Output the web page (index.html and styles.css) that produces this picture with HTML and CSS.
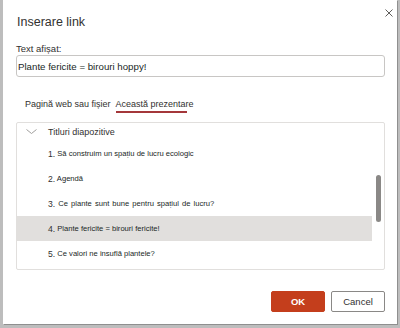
FILE: index.html
```html
<!DOCTYPE html>
<html>
<head>
    <meta http-equiv="Content-Type" content="text/html;charset=UTF-8"/>
    <title>Inserare link</title>
    <link rel="stylesheet" href="styles.css">
</head>
<body>
<div class="dialog">
    <div class="header">
        <h1>Inserare link</h1>
        <button class="close" aria-label="Închidere">
            <svg width="8" height="8" viewBox="0 0 8 8">
                <path d="M0.5 0.5 L7.5 7.5 M7.5 0.5 L0.5 7.5" stroke="#605e5c" stroke-width="1" fill="none"/>
            </svg>
        </button>
    </div>
    <label class="field-label" for="displayText">Text afișat:</label>
    <input type="text" id="displayText" class="text-input" value="Plante fericite = birouri hoppy!">

    <div class="tabs">
        <span class="tab">Pagină web sau fișier</span>
        <span class="tab active">Această prezentare</span>
    </div>

    <div class="list-box">
        <div class="rows">
            <div class="group-row">
                <svg class="chevron" width="11" height="5" viewBox="0 0 11 5">
                    <path d="M0.5 0.5 L5.5 4.5 L10.5 0.5" stroke="#a19f9d" stroke-width="1" fill="none"/>
                </svg>
                <span>Titluri diapozitive</span>
            </div>
            <div class="item"><span class="num">1.</span> Să construim un spațiu de lucru ecologic</div>
            <div class="item"><span class="num">2.</span> Agendă</div>
            <div class="item wide"><span class="num">3.</span> Ce plante sunt bune pentru spațiul de lucru?</div>
            <div class="item selected"><span class="num">4.</span> Plante fericite = birouri fericite!</div>
            <div class="item"><span class="num">5.</span> Ce valori ne insuflă plantele?</div>
        </div>
        <div class="scrollbar">
            <div class="thumb"></div>
        </div>
    </div>

    <div class="actions">
        <button class="btn primary">OK</button>
        <button class="btn">Cancel</button>
    </div>
</div>
</body>
</html>
```

FILE: styles.css
```css
body {
    margin: 0;
    background-color: #bdbdbd;
    font-family: "Liberation Sans", Arial, sans-serif;
    color: #323130;
    height: 328px;
    overflow: hidden;
}

.dialog {
    margin-left: 3px;
    width: 394px;
    height: 324px;
    box-sizing: border-box;
    padding: 0 12px 0 13px;
    background: #fff;
    box-shadow: 1px 1px 0 #8f8f8f;
    display: flex;
    flex-direction: column;
}

.header {
    display: flex;
    justify-content: space-between;
    align-items: flex-start;
}

.header h1 {
    margin: 14px 0 0 1px;
    font-size: 12.5px;
    line-height: 16px;
    font-weight: normal;
    color: #323130;
}

.close {
    margin: 8px -9px 0 0;
    padding: 0;
    width: 10px;
    height: 10px;
    border: none;
    background: none;
    display: flex;
    align-items: center;
    justify-content: center;
}

.field-label {
    display: block;
    margin-top: 13px;
    font-size: 9.5px;
    line-height: 12px;
}

.text-input {
    display: block;
    box-sizing: border-box;
    width: 369px;
    height: 22px;
    margin: 0;
    padding: 0 0 0 1px;
    border: 1px solid #c8c6c4;
    border-radius: 3px;
    font-family: inherit;
    font-size: 9.7px;
    color: #201f1e;
}

.tabs {
    display: flex;
    gap: 5px;
    margin-top: 21px;
    padding-left: 9px;
}

.tab {
    font-size: 9px;
    line-height: 12px;
    padding-bottom: 1px;
    border-bottom: 2px solid transparent;
}

.tab.active {
    border-bottom: none;
    padding-bottom: 3px;
    background: linear-gradient(#a4373a, #a4373a) no-repeat left bottom / 71px 2px;
}

.list-box {
    margin-top: 9px;
    box-sizing: border-box;
    width: 369px;
    height: 148px;
    border: 1px solid #e1dfdd;
    border-radius: 2px;
    display: flex;
    overflow: hidden;
}

.rows {
    flex: 1;
}

.group-row {
    height: 18px;
    display: flex;
    align-items: center;
    font-size: 9px;
}

.chevron {
    margin: -2px 11px 0 9px;
}

.item {
    height: 25px;
    display: flex;
    align-items: center;
    padding-left: 31px;
    font-size: 7.6px;
    color: #201f1e;
    white-space: pre;
}

.item .num {
    font-size: 8.6px;
    color: #323130;
}

.item.wide {
    word-spacing: 1px;
}

.item.selected {
    background: #e1dfdd;
}

.scrollbar {
    width: 12px;
}

.thumb {
    margin: 52px 0 0 4px;
    width: 5px;
    height: 47px;
    border-radius: 3px;
    background: #8a8886;
}

.actions {
    display: flex;
    justify-content: flex-end;
    gap: 6px;
    margin-top: 21px;
}

.btn {
    width: 54px;
    height: 21px;
    box-sizing: border-box;
    border: 1px solid #8a8886;
    border-radius: 2px;
    background: #fff;
    font-family: inherit;
    font-size: 9.5px;
    color: #323130;
    padding: 0;
}

.btn.primary {
    background: #c43e1c;
    border-color: #c43e1c;
    color: #fff;
    font-weight: bold;
}
```
